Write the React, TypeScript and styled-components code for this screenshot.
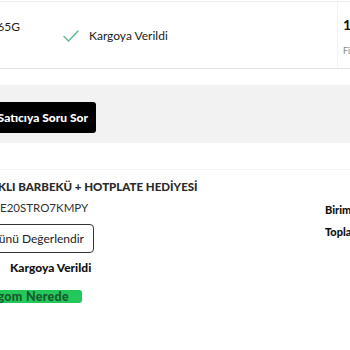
import styled, { createGlobalStyle } from "styled-components";

const GlobalStyle = createGlobalStyle`
  html, body {
    margin: 0;
    padding: 0;
    background: #ffffff;
  }
  body {
    font-family: Lato, "Open Sans", Arial, sans-serif;
    color: #222;
  }
`;

const Page = styled.div`
  width: 350px;
  height: 350px;
  overflow: hidden;
  background: #fff;
`;

const TopCard = styled.div`
  margin-top: 1px;
  height: 66px;
  border-top: 1px solid #ededed;
  border-bottom: 1px solid #e4e4e4;
  display: flex;
  align-items: center;
`;

const ProductName = styled.div`
  align-self: flex-start;
  margin-top: 17px;
  width: 20px;
  display: flex;
  justify-content: flex-end;
  white-space: nowrap;
  font-size: 12px;
  color: #222;
`;

const Status = styled.div`
  margin-left: 43px;
  margin-top: 1px;
  display: flex;
  align-items: center;
  gap: 10px;
  font-size: 12px;
  color: #222;
`;

const PriceCol = styled.div`
  margin-left: auto;
  margin-right: -40px;
  width: 47px;
  align-self: stretch;
  display: flex;
  flex-direction: column;
  padding-top: 14px;
  gap: 12px;
  border-left: 1px solid #f3f3f3;
  padding-left: 5px;
`;

const Price = styled.div`
  font-size: 14px;
  font-weight: 700;
  color: #111;
  white-space: nowrap;
`;

const PriceNote = styled.div`
  font-size: 9px;
  color: #888;
  white-space: nowrap;
`;

const GrayBand = styled.div`
  margin-top: 16px;
  height: 58px;
  background: #f2f2f2;
  display: flex;
  align-items: flex-start;
  padding-top: 17px;
  box-sizing: border-box;
`;

const Button = styled.button<{ $variant: "dark" | "outline" | "green" }>`
  font-family: inherit;
  white-space: nowrap;
  cursor: pointer;
  display: flex;
  align-items: center;
  justify-content: flex-end;
  box-sizing: border-box;
  ${({ $variant }) =>
    $variant === "dark"
      ? `
    height: 31px;
    width: 116px;
    margin-left: -20px;
    padding: 0 8px 0 0;
    background: #000;
    color: #fff;
    border: none;
    border-radius: 3px;
    font-size: 12px;
    font-weight: 900;
  `
      : $variant === "outline"
      ? `
    height: 29px;
    width: 124px;
    margin-left: -30px;
    padding: 0 9px 0 0;
    background: #fff;
    color: #222;
    border: 1px solid #333;
    border-radius: 4px;
    font-size: 12px;
    font-weight: 400;
  `
      : `
    height: 13px;
    width: 114px;
    margin-left: -32px;
    padding: 0 13px 0 0;
    background: #23c75a;
    color: #175a2c;
    border: none;
    border-radius: 3px;
    font-size: 12.5px;
    font-weight: 900;
    letter-spacing: 0.3px;
  `}
`;

const OrderCard = styled.div`
  margin-top: 26px;
  border-top: 1px solid #f4f4f4;
  display: flex;
  padding-top: 10px;
`;

const ItemInfo = styled.div`
  flex: 1;
  display: flex;
  flex-direction: column;
  align-items: flex-start;
`;

const ItemTitle = styled.div`
  margin-left: -2px;
  font-size: 11.5px;
  font-weight: 900;
  color: #2a2a2a;
  white-space: nowrap;
`;

const ItemCode = styled.div`
  margin-top: 8px;
  font-size: 11.5px;
  color: #333;
  white-space: nowrap;
`;

const ActionRow = styled.div`
  margin-top: 10px;
`;

const ShipStatus = styled.div`
  margin-top: 7px;
  margin-left: 10px;
  font-size: 12px;
  font-weight: 900;
  color: #111;
  white-space: nowrap;
`;

const TrackRow = styled.div`
  margin-top: 15px;
`;

const Totals = styled.div`
  width: 25px;
  padding-top: 23px;
  display: flex;
  flex-direction: column;
  gap: 9px;
`;

const TotalLabel = styled.div`
  font-size: 11px;
  font-weight: 900;
  color: #111;
  white-space: nowrap;
`;

const CheckIcon = () => (
  <svg width="16" height="12" viewBox="0 0 16 12" fill="none">
    <path d="M1 6.5 L5.5 11 L15 1" stroke="#5fb98a" strokeWidth="1.4" strokeLinecap="round" strokeLinejoin="round" />
  </svg>
);

export default function App() {
  return (
    <Page>
      <GlobalStyle />
      <TopCard>
        <ProductName>QE65Q60T 65G</ProductName>
        <Status>
          <CheckIcon />
          <span>Kargoya Verildi</span>
        </Status>
        <PriceCol>
          <Price>1.299 TL</Price>
          <PriceNote>Fiyat</PriceNote>
        </PriceCol>
      </TopCard>

      <GrayBand>
        <Button $variant="dark">Satıcıya Soru Sor</Button>
      </GrayBand>

      <OrderCard>
        <ItemInfo>
          <ItemTitle>KLI BARBEKÜ + HOTPLATE HEDİYESİ</ItemTitle>
          <ItemCode>E20STRO7KMPY</ItemCode>
          <ActionRow>
            <Button $variant="outline">Ürünü Değerlendir</Button>
          </ActionRow>
          <ShipStatus>Kargoya Verildi</ShipStatus>
          <TrackRow>
            <Button $variant="green">Kargom Nerede</Button>
          </TrackRow>
        </ItemInfo>
        <Totals>
          <TotalLabel>Birim Fiyat</TotalLabel>
          <TotalLabel>Toplam</TotalLabel>
        </Totals>
      </OrderCard>
    </Page>
  );
}
